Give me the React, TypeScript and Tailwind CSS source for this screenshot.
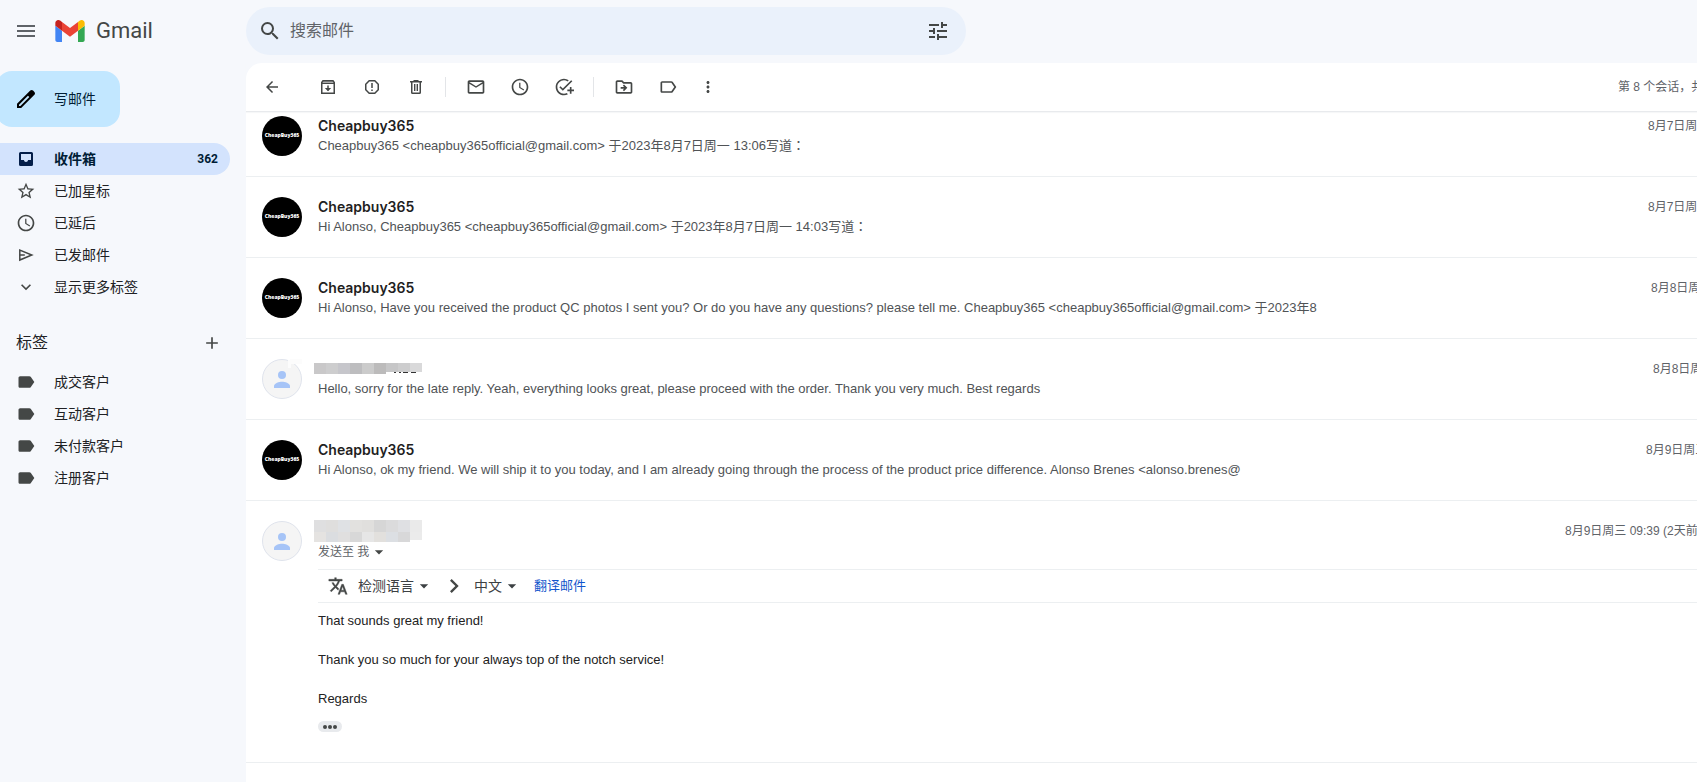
import type { ReactNode } from "react";
import {
  MdAccessTime,
  MdAdd,
  MdAddTask,
  MdArrowBack,
  MdArrowDropDown,
  MdChevronRight,
  MdExpandMore,
  MdLabel,
  MdMenu,
  MdMoreVert,
  MdOutlineDriveFileMove,
  MdOutlineLabel,
  MdOutlineMail,
  MdSearch,
  MdStarBorder,
  MdTune,
} from "react-icons/md";

function GmailLogo() {
  return (
    <svg viewBox="52 42 88 66" className="h-[22px] w-[30px]" aria-hidden="true">
      <path fill="#4285f4" d="M58 108h14V74L52 59v43c0 3.32 2.69 6 6 6" />
      <path fill="#34a853" d="M120 108h14c3.32 0 6-2.69 6-6V59l-20 15" />
      <path fill="#fbbc04" d="M120 48v26l20-15v-8c0-7.42-8.47-11.65-14.4-7.2" />
      <path fill="#ea4335" d="M72 74V48l24 18 24-18v26L96 92" />
      <path fill="#c5221f" d="M52 51v8l20 15V48l-5.6-4.2c-5.94-4.45-14.4-.22-14.4 7.2" />
    </svg>
  );
}

function PencilIcon() {
  return (
    <svg viewBox="0 0 24 24" className="size-6" aria-hidden="true">
      <path
        fill="#000"
        d="M20.41 4.94l-1.35-1.35a1.98 1.98 0 0 0-2.81 0L3 16.82V21h4.18L20.41 7.77c.79-.78.79-2.05 0-2.83zM6.41 19.06L5 19v-1.36l8.95-8.95 1.39 1.39-8.93 8.98z"
      />
    </svg>
  );
}

function InboxIcon() {
  return (
    <svg viewBox="0 0 20 20" className="size-5" fill="currentColor" aria-hidden="true">
      <path
        fillRule="evenodd"
        d="M4.500 3h11A1.500 1.500 0 0 1 17 4.500v11a1.500 1.500 0 0 1-1.500 1.500h-11A1.500 1.500 0 0 1 3 15.500v-11A1.500 1.500 0 0 1 4.500 3zM5 5v6h3c0 1.100.9 2 2 2s2-.9 2-2h3V5H5z"
      />
    </svg>
  );
}

function ArchiveIcon() {
  return (
    <svg viewBox="0 0 20 20" className="size-5" fill="none" stroke="currentColor" aria-hidden="true">
      <path fill="currentColor" fillOpacity="0.45" stroke="none" d="M4 4h12v3H4z" />
      <path strokeWidth="1.500" d="M3.750 5.500l1.250-1.750h10l1.250 1.750v10.750H3.750z" />
      <path strokeWidth="1" d="M3.750 6.500h12.500" />
      <path strokeWidth="1.500" d="M10 8.500v5" />
      <path fill="currentColor" stroke="none" d="M6.800 11h6.400L10 14.300z" />
    </svg>
  );
}

function ReportIcon() {
  return (
    <svg viewBox="0 0 20 20" className="size-5" fill="none" stroke="currentColor" strokeWidth="1.500" aria-hidden="true">
      <path d="M7.200 3.750h5.600l3.450 3.450v5.600l-3.450 3.450H7.200L3.750 12.800V7.200z" />
      <path d="M10 6v5M10 12.500v1.500" />
    </svg>
  );
}

function TrashIcon() {
  return (
    <svg viewBox="0 0 20 20" className="size-5" fill="currentColor" aria-hidden="true">
      <path d="M12.5 4V3h-5v1H4v1.5h1V15.5A1.5 1.5 0 0 0 6.500 17h7a1.500 1.500 0 0 0 1.500-1.500V5.500h1V4h-3.500zM13.500 15.500h-7V5.500h7v10zM8 7h1.400v7H8V7zm2.600 0H12v7h-1.400V7z" />
    </svg>
  );
}

function SentIcon() {
  return (
    <svg viewBox="0 0 20 20" className="size-5" fill="none" stroke="currentColor" strokeWidth="1.500" aria-hidden="true">
      <path d="M3.800 5v10l12-5-12-5z" />
      <path d="M3.800 10h5" />
    </svg>
  );
}

function TranslateIcon() {
  return (
    <svg viewBox="0 0 24 24" className="size-5" fill="#444746" stroke="#444746" strokeWidth="0.500" aria-hidden="true">
      <path d="M12.870 15.070l-2.540-2.510.03-.03A17.520 17.520 0 0 0 14.070 6H17V4h-7V2H8v2H1v1.990h11.170C11.500 7.920 10.440 9.750 9 11.350 8.070 10.320 7.300 9.190 6.690 8h-2c.73 1.630 1.730 3.170 2.980 4.560l-5.090 5.020L4 19l5-5 3.110 3.110.76-2.040zM18.500 10h-2L12 22h2l1.120-3h4.750L21 22h2l-4.500-12zm-2.620 7l1.620-4.330L19.120 17h-3.240z" />
    </svg>
  );
}

function BrandAvatar() {
  return (
    <span className="flex size-10 shrink-0 items-center justify-center rounded-full bg-black font-['Open_Sans',sans-serif] text-[5px] font-extrabold text-white">
      CheapBuy365
    </span>
  );
}

function PersonAvatar({ smudged = false }: { smudged?: boolean }) {
  return (
    <svg viewBox="0 0 40 40" className="size-10 shrink-0" aria-hidden="true">
      <circle cx="20" cy="20" r="19.500" fill="#f5f5f5" stroke="#dfe3ec" />
      <circle cx="20" cy="16" r="4" fill="#a6c4f7" />
      <path fill="#a6c4f7" d="M12 29v-2c0-2.700 5.300-4.200 8-4.200s8 1.500 8 4.200v2z" />
      {smudged && <path fill="#fcfcfc" d="M28 0h12v5H28zM26 1h3v8h-3z" />}
    </svg>
  );
}

const topCells = ["#c9c8c9", "#cdcdce", "#c6c6cb", "#bdbdbf", "#cbcbcb", "#bcbbbb", "#c6c6c7", "#cdcdce", "#d9d9da"];
const wideCells = [
  ["#dfdfe0", "#dfdedd", "#dfe1e4", "#e2e1df", "#e0dfdd", "#d6d6d6", "#dbdbdc", "#dfe0e3", "#eaeaea"],
  ["#e5e3e1", "#dbdde0", "#e0dfdf", "#d8d8d8", "#e6e6e6", "#e2e0dd", "#dcdfe3", "#d8d8d9", "#ebebeb"],
];

function NarrowMosaic() {
  return (
    <svg viewBox="0 0 108 12" className="h-3 w-27" aria-hidden="true">
      <path fill="#333" d="M80 9h2v1h-2zM85 9h2v1h-2zM89 9h5v1h-5zM97 9h5v1h-5z" />
      {topCells.map((color, i) => (
        <rect key={i} x={i * 12} y="0" width="12" height={i < 6 ? 11 : 9} fill={color} />
      ))}
    </svg>
  );
}

function WideMosaic() {
  return (
    <svg viewBox="0 0 108 22" className="h-[22px] w-27" aria-hidden="true">
      {wideCells.map((row, r) =>
        row.map((color, i) => (
          <rect key={`${r}-${i}`} x={i * 12} y={r * 12} width="12" height={r === 0 ? 12 : i === 8 ? 8 : 10} fill={color} />
        )),
      )}
    </svg>
  );
}

function NavItem({ icon, label, count, active = false }: { icon: ReactNode; label: string; count?: string; active?: boolean }) {
  return (
    <li>
      <a
        href="#"
        className={
          active
            ? "flex h-8 items-center rounded-r-full bg-[#d3e3fd] pr-3 pl-4 text-sm font-bold text-[#001d35]"
            : "flex h-8 items-center pr-3 pl-4 text-sm text-[#202124]"
        }
      >
        <span className={active ? "text-[#041e49]" : "text-[#444746]"}>{icon}</span>
        <span className="ml-[18px] flex-1">{label}</span>
        {count && <span className="font-['Roboto',sans-serif] text-xs">{count}</span>}
      </a>
    </li>
  );
}

function ToolButton({ label, children, narrow = false }: { label: string; children: ReactNode; narrow?: boolean }) {
  return (
    <button
      type="button"
      aria-label={label}
      className={narrow ? "flex h-10 w-9 items-center justify-center" : "flex h-10 w-11 items-center justify-center"}
    >
      {children}
    </button>
  );
}

function ToolDivider() {
  return (
    <span className="flex w-4 pl-[7px]">
      <span className="h-5 w-px bg-[#e3e5e8]" />
    </span>
  );
}

type Message = { sender?: string; snippet: string; colon?: boolean; date: string; dateWidth: string };

const messages: Message[] = [
  {
    sender: "Cheapbuy365",
    snippet: "Cheapbuy365 <cheapbuy365official@gmail.com> 于2023年8月7日周一 13:06写道",
    colon: true,
    date: "8月7日周",
    dateWidth: "w-[49px]",
  },
  {
    sender: "Cheapbuy365",
    snippet: "Hi Alonso, Cheapbuy365 <cheapbuy365official@gmail.com> 于2023年8月7日周一 14:03写道",
    colon: true,
    date: "8月7日周",
    dateWidth: "w-[49px]",
  },
  {
    sender: "Cheapbuy365",
    snippet:
      "Hi Alonso, Have you received the product QC photos I sent you? Or do you have any questions? please tell me. Cheapbuy365 <cheapbuy365official@gmail.com> 于2023年8",
    date: "8月8日周",
    dateWidth: "w-[46px]",
  },
  {
    snippet:
      "Hello, sorry for the late reply. Yeah, everything looks great, please proceed with the order. Thank you very much. Best regards",
    date: "8月8日周",
    dateWidth: "w-11",
  },
  {
    sender: "Cheapbuy365",
    snippet:
      "Hi Alonso, ok my friend. We will ship it to you today, and I am already going through the process of the product price difference. Alonso Brenes <alonso.brenes@",
    date: "8月9日周三",
    dateWidth: "w-[51px]",
  },
];

function MessageRow({ message, first }: { message: Message; first: boolean }) {
  return (
    <li
      className={
        first
          ? "flex border-b border-[#eceff1] pt-1 pb-5 pl-4"
          : "flex border-b border-[#eceff1] py-5 pl-4"
      }
    >
      {message.sender ? <BrandAvatar /> : <PersonAvatar smudged />}
      <div className="ml-4 min-w-0 flex-1">
        {message.sender ? (
          <h3 className="h-5 font-['Inter',sans-serif] text-sm leading-5 font-semibold text-[#1f1f1f]">{message.sender}</h3>
        ) : (
          <div className="-ml-1 flex h-5 items-center">
            <NarrowMosaic />
          </div>
        )}
        <p className="h-5 truncate text-[13px] leading-5 text-[#505356]">
          {message.snippet}
          {message.colon && <span className="font-['Noto_Sans_CJK_TC',sans-serif] leading-none">：</span>}
        </p>
      </div>
      <time className={`${message.dateWidth} shrink-0 overflow-hidden text-xs leading-5 whitespace-nowrap text-[#5f6368]`}>
        {message.date}
      </time>
    </li>
  );
}

function OpenMessage() {
  return (
    <li className="flex border-b border-[#eceff1] pt-5 pb-[30px] pl-4">
      <PersonAvatar />
      <div className="ml-4 min-w-0 flex-1">
        <div className="flex justify-between">
          <div className="-mt-px -ml-1">
            <WideMosaic />
          </div>
          <time className="w-[132px] shrink-0 overflow-hidden text-xs leading-5 whitespace-nowrap text-[#5f6368]">
            8月9日周三 09:39 (2天前
          </time>
        </div>
        <button type="button" className="flex h-5 items-center text-xs text-[#5f6368]">
          发送至 我
          <MdArrowDropDown className="size-5 text-[#444746]" />
        </button>
        <div className="mt-[7px] flex h-[34px] items-center border-y border-[#eceff1] pl-[10px] text-sm text-[#3c4043]">
          <TranslateIcon />
          <label className="ml-[10px] flex items-center">
            <select aria-label="源语言" className="w-14 appearance-none bg-transparent">
              <option>检测语言</option>
            </select>
            <MdArrowDropDown className="size-5" />
          </label>
          <MdChevronRight className="mx-[6px] size-7 text-[#444746]" />
          <label className="flex items-center">
            <select aria-label="目标语言" className="w-7 appearance-none bg-transparent">
              <option>中文</option>
            </select>
            <MdArrowDropDown className="size-5" />
          </label>
          <a href="#" className="ml-3 text-[13px] text-[#1155cc]">
            翻译邮件
          </a>
        </div>
        <div className="mt-2 flex flex-col gap-[19px] text-[13px] leading-5 text-[#222222]">
          <p>That sounds great my friend!</p>
          <p>Thank you so much for your always top of the notch service!</p>
          <p>Regards</p>
        </div>
        <button
          type="button"
          aria-label="显示被修剪的内容"
          className="mt-3 flex h-[11px] w-6 items-center justify-center gap-px rounded-full bg-[#e8eaed]"
        >
          <span className="size-1 rounded-full bg-[#444746]" />
          <span className="size-1 rounded-full bg-[#444746]" />
          <span className="size-1 rounded-full bg-[#444746]" />
        </button>
      </div>
    </li>
  );
}

export default function App() {
  return (
    <div className="flex min-h-screen flex-col overflow-hidden bg-[#f6f8fc] font-['Liberation_Sans','Noto_Sans_CJK_SC',sans-serif]">
      <header className="flex items-start pb-2">
        <div className="-mb-2 flex h-[62px] w-[246px] shrink-0 items-center pl-[14px]">
          <button type="button" aria-label="主菜单">
            <MdMenu className="size-6 text-[#5f6368]" />
          </button>
          <a href="#" className="ml-[17px] flex items-center gap-[11px] font-['Roboto',sans-serif] text-[22px] leading-7 text-[#444746]">
            <GmailLogo />
            Gmail
          </a>
        </div>
        <form className="mt-[7px] flex h-12 w-full max-w-[720px] items-center rounded-full bg-[#eaf1fb] pr-4 pl-3 text-[#444746]">
          <button type="button" aria-label="搜索">
            <MdSearch className="size-6" />
          </button>
          <input
            type="text"
            aria-label="搜索邮件"
            placeholder="搜索邮件"
            className="ml-2 min-w-0 flex-1 bg-transparent text-base outline-none placeholder:text-[#5f6368]"
          />
          <button type="button" aria-label="显示搜索选项">
            <MdTune className="size-6" />
          </button>
        </form>
      </header>

      <div className="flex flex-1">
        <aside className="w-[246px] shrink-0 pt-2 pr-4">
          <button
            type="button"
            className="-ml-1 flex h-14 w-[124px] items-center rounded-2xl bg-[#c2e7ff] pl-[18px] text-sm text-[#001d35]"
          >
            <PencilIcon />
            <span className="ml-4">写邮件</span>
          </button>
          <nav className="mt-4">
            <ul>
              <NavItem active icon={<InboxIcon />} label="收件箱" count="362" />
              <NavItem icon={<MdStarBorder className="size-5" />} label="已加星标" />
              <NavItem icon={<MdAccessTime className="size-5" />} label="已延后" />
              <NavItem icon={<SentIcon />} label="已发邮件" />
              <NavItem icon={<MdExpandMore className="size-5" />} label="显示更多标签" />
            </ul>
            <div className="mt-5 flex h-10 items-center justify-between pr-2 pl-4">
              <h2 className="text-base text-[#202124]">标签</h2>
              <button type="button" aria-label="创建新标签">
                <MdAdd className="size-5 text-[#444746]" />
              </button>
            </div>
            <ul className="mt-[3px]">
              <NavItem icon={<MdLabel className="size-5" />} label="成交客户" />
              <NavItem icon={<MdLabel className="size-5" />} label="互动客户" />
              <NavItem icon={<MdLabel className="size-5" />} label="未付款客户" />
              <NavItem icon={<MdLabel className="size-5" />} label="注册客户" />
            </ul>
          </nav>
        </aside>

        <main className="min-w-0 flex-1 rounded-tl-2xl bg-white">
          <div className="flex h-[49px] items-center border-b border-[#e8eaed] pl-1 text-[#444746] shadow-[0_1px_1px_#f6f7f8]">
            <ToolButton label="返回">
              <MdArrowBack className="size-[18px]" />
            </ToolButton>
            <div className="ml-3 flex items-center">
              <ToolButton label="归档">
                <ArchiveIcon />
              </ToolButton>
              <ToolButton label="举报垃圾邮件">
                <ReportIcon />
              </ToolButton>
              <ToolButton label="删除">
                <TrashIcon />
              </ToolButton>
              <ToolDivider />
              <ToolButton label="标记为未读">
                <MdOutlineMail className="size-5" />
              </ToolButton>
              <ToolButton label="延后">
                <MdAccessTime className="size-5" />
              </ToolButton>
              <ToolButton label="添加到 Tasks">
                <MdAddTask className="size-5" />
              </ToolButton>
              <ToolDivider />
              <ToolButton label="移至">
                <MdOutlineDriveFileMove className="size-5" />
              </ToolButton>
              <ToolButton label="标签">
                <MdOutlineLabel className="size-5" />
              </ToolButton>
              <ToolButton label="更多" narrow>
                <MdMoreVert className="size-[18px]" />
              </ToolButton>
            </div>
            <span className="ml-auto w-[79px] overflow-hidden text-xs whitespace-nowrap text-[#5f6368]">第 8 个会话，共</span>
          </div>
          <ul>
            {messages.map((message, index) => (
              <MessageRow key={index} message={message} first={index === 0} />
            ))}
            <OpenMessage />
          </ul>
        </main>
      </div>
    </div>
  );
}
